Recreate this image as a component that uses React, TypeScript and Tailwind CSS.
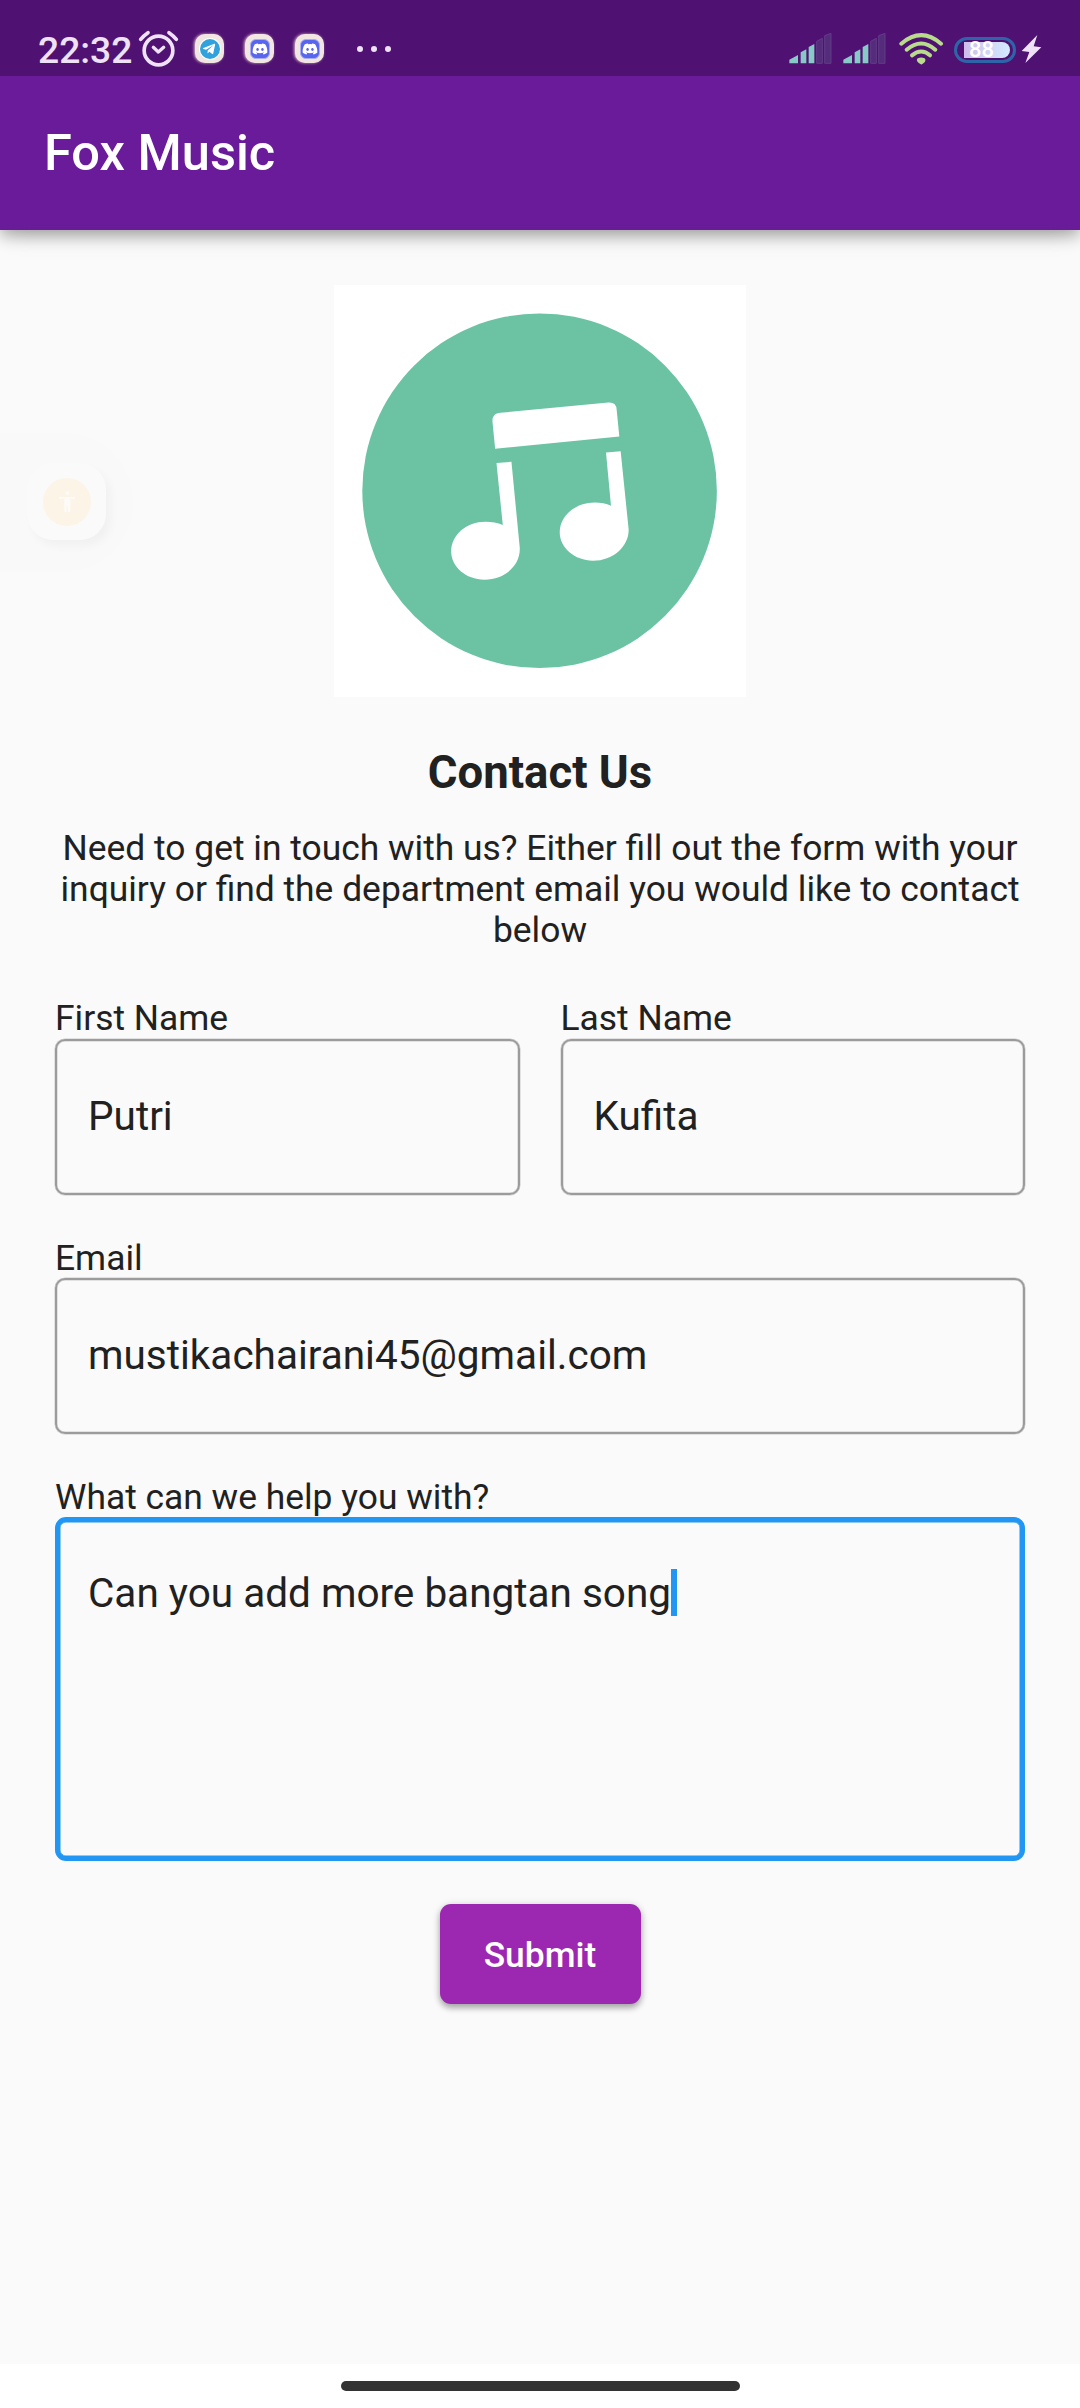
import type { ReactNode } from "react";
import { FaDiscord, FaTelegramPlane } from "react-icons/fa";

function Signal() {
  return (
    <svg viewBox="84 96 135 99" className="mt-8 h-[33px] w-[45px]">
      <g fill="#86c9c6">
        <path d="M88 179 L114 165 V190 H88Z" />
        <path d="M122 157 L139 148 V190 H122Z" />
        <path d="M146 141 L163 132 V190 H146Z" />
      </g>
      <g fill="#552b7c" stroke="#65428a" strokeWidth="2.5">
        <path d="M170 124 L187 115 V190 H170Z" />
        <path d="M194 107 L213 100 V190 H194Z" />
      </g>
    </svg>
  );
}

function AppChip({ children }: { children: ReactNode }) {
  return (
    <div className="mt-[34px] flex size-[29px] items-center justify-center rounded-[10px] bg-[#f1e6e1] text-white shadow-[-1px_0_3px_#d9b8c4]">
      {children}
    </div>
  );
}

function DiscordChip() {
  return (
    <AppChip>
      <div className="flex size-5 items-center justify-center rounded-[6px] border border-[#a9aef0] bg-[#5865ee]">
        <FaDiscord className="size-4 shrink-0" />
      </div>
    </AppChip>
  );
}

function StatusBar() {
  return (
    <div className="flex h-[76px] items-start bg-[#4f1272] pr-[37px] pl-[38px]">
      <span className="mt-7 w-[94px] text-[37.2px] leading-[45px] font-medium text-[#efe2f6]">22:32</span>
      <svg viewBox="414 90 123 114" className="mt-[30px] ml-[6px] h-[38px] w-[41px] shrink-0" fill="none" stroke="#efe2f6" strokeLinecap="round">
        <circle cx="475.500" cy="151.500" r="43" strokeWidth="11" />
        <path d="M460 142 L475 156 L491 142" strokeWidth="10" strokeLinejoin="round" />
        <path d="M422 118 Q431 107 444 98 M529 118 Q520 107 507 98" strokeWidth="11" />
      </svg>
      <div className="ml-4 flex gap-[21px]">
        <AppChip>
          <div className="flex size-5 items-center justify-center rounded-full bg-[#32a2dc] shadow-[0_0_0_1px_#ffffff]">
            <FaTelegramPlane className="mr-0.5 size-3.5" />
          </div>
        </AppChip>
        <DiscordChip />
        <DiscordChip />
      </div>
      <div className="mt-[46px] ml-[33px] flex gap-2">
        <i className="size-1.5 rounded-full bg-[#efe2f6]" />
        <i className="size-1.5 rounded-full bg-[#efe2f6]" />
        <i className="size-1.5 rounded-full bg-[#efe2f6]" />
      </div>
      <div className="ml-auto flex">
        <Signal />
        <div className="w-[9px]" />
        <Signal />
        <svg viewBox="414 96 138 102" className="mt-8 ml-[11px] h-[34px] w-[46px]" fill="none" stroke="#b9dc8c" strokeWidth="12" strokeLinecap="round">
          <path d="M424 131 Q484 80 543 131" />
          <path d="M440 149 Q484 112 526 149" />
          <path d="M456 166 Q484 143 510 166" />
          <path d="M475 178 Q484 174 492 178 Q496 183 484 190 Q471 183 475 178Z" fill="#b9dc8c" strokeWidth="7" strokeLinejoin="round" />
        </svg>
        <div className="mt-[37px] ml-[10px] flex h-[26px] w-[62px] items-center rounded-full border-[3px] border-[#2d65a8] pl-[7px]">
          <div className="flex h-4 w-[46px] items-center rounded-r-full bg-linear-to-r from-[#cdbdea] to-[#d2ecff] pl-[5px] text-[22px] leading-4 font-medium text-white">
            88
          </div>
        </div>
        <svg viewBox="786 102 63 90" className="mt-[34px] ml-[5px] h-[30px] w-[21px]" fill="#efe2f6">
          <path d="M835 105 L788 153 L811 156 L799 189 L847 142 L824 139Z" />
        </svg>
        <div className="w-px" />
      </div>
    </div>
  );
}

function Logo() {
  return (
    <svg viewBox="42 45 1237.500 1237.500" className="size-[412px] bg-white">
      <circle cx="659.500" cy="663" r="532.500" fill="#6bc3a4" />
      <g fill="#fff">
        <path d="M526 537 L518 455 Q517 431 541 429 L866 398 Q890 396 891 420 L899 500Z" />
        <path d="M530 580 L575 576 L600 835 C602 888 555 930 494 930 C438 930 394 892 394 845 C394 795 440 756 497 756 Q525 756 549 766Z" />
        <path d="M859 548 L903 544 L927 779 C928 830 880 873 820 873 C765 873 720 835 720 788 C720 738 767 698 825 698 Q852 698 874 708Z" />
      </g>
    </svg>
  );
}

function Field({ label, value, labelClass = "" }: { label: string; value: string; labelClass?: string }) {
  return (
    <div className="min-w-0 flex-1">
      <div className={"h-[42px] text-[35.4px] leading-[43px] " + labelClass}>{label}</div>
      <div className="h-[156px] rounded-[10px] border-2 border-[#9b9b9b] pt-[52px] pl-[31px] text-[40.5px] leading-[47px] shadow-[0_0_0_0.5px_#9b9b9b80,inset_0_0_0_0.5px_#9b9b9b80]">
        {value}
      </div>
    </div>
  );
}

export default function App() {
  return (
    <div className="relative flex h-[2408px] w-[1080px] flex-col overflow-hidden bg-[#fafafa] font-[Roboto,sans-serif] text-[#212121]">
      <header className="relative z-10 shadow-[0_6px_14px_rgba(0,0,0,0.24),0_3px_26px_-6px_rgba(0,0,0,0.3)]">
        <StatusBar />
        <div className="flex h-[154px] items-center bg-[#6a1b9a] pl-11 text-[50.6px] leading-[60px] font-medium text-white">
          <h1>Fox Music</h1>
        </div>
      </header>

      <main className="flex flex-1 flex-col items-center px-[55px] pt-[55px]">
        <Logo />
        <h2 className="mt-[49px] text-[45.5px] leading-[53px] font-bold">Contact Us</h2>
        <p className="mt-[29px] text-center text-[35.4px] leading-[41px]">
          Need to get in touch with us? Either fill out the form with your inquiry or find the department email you would like to contact below
        </p>
        <div className="mt-[46px] flex w-full gap-[41px]">
          <Field label="First Name" value="Putri" />
          <Field label="Last Name" value="Kufita" />
        </div>
        <div className="mt-[41px] flex w-full">
          <Field label="Email" value="mustikachairani45@gmail.com" labelClass="pt-px" />
        </div>
        <div className="mt-[42px] w-full">
          <div className="h-[41px] text-[35.4px] leading-[43px]">What can we help you with?</div>
          <div className="flex h-[344px] items-start rounded-[11px] border-[5px] border-[#2196f3] pt-[47px] pl-7 text-[40.5px] leading-[47px] shadow-[inset_0_0_0_0.5px_#2196f3]">
            <span className="pt-px">Can you add more bangtan song</span>
            <span className="h-[47px] w-[5.5px] bg-[#2196f3]" />
          </div>
        </div>
        <button className="mt-[43px] h-[100px] w-[201px] rounded-[11px] bg-[#9c27b0] pt-0.5 text-[35.4px] leading-[41px] font-medium text-white shadow-[0_4px_6px_rgba(0,0,0,0.28),0_1px_9px_rgba(0,0,0,0.14)]">
          Submit
        </button>
      </main>

      <footer className="flex h-11 justify-center bg-white pt-[17px]">
        <div className="h-2.5 w-[399px] rounded-full bg-[#333333]" />
      </footer>

      <div className="absolute top-[433px] left-0 h-[139px] w-[133px] rounded-r-full bg-[#f9f9f9]">
        <div className="absolute top-[30px] left-[27px] flex h-[77px] w-[79px] items-center justify-center rounded-[26px] bg-[#fafafa] shadow-[5px_6px_10px_rgba(0,0,0,0.035)]">
          <div className="flex size-12 items-center justify-center rounded-full bg-[#fcf4e7]">
            <svg viewBox="0 0 48 66" className="h-[22px] w-4" fill="#fdfbf8">
              <circle cx="25" cy="6" r="6" />
              <path d="M0 18 H48 V23 H34 V62 H27 V46 H23 V62 H16 V23 H0Z" />
            </svg>
          </div>
        </div>
      </div>
    </div>
  );
}
